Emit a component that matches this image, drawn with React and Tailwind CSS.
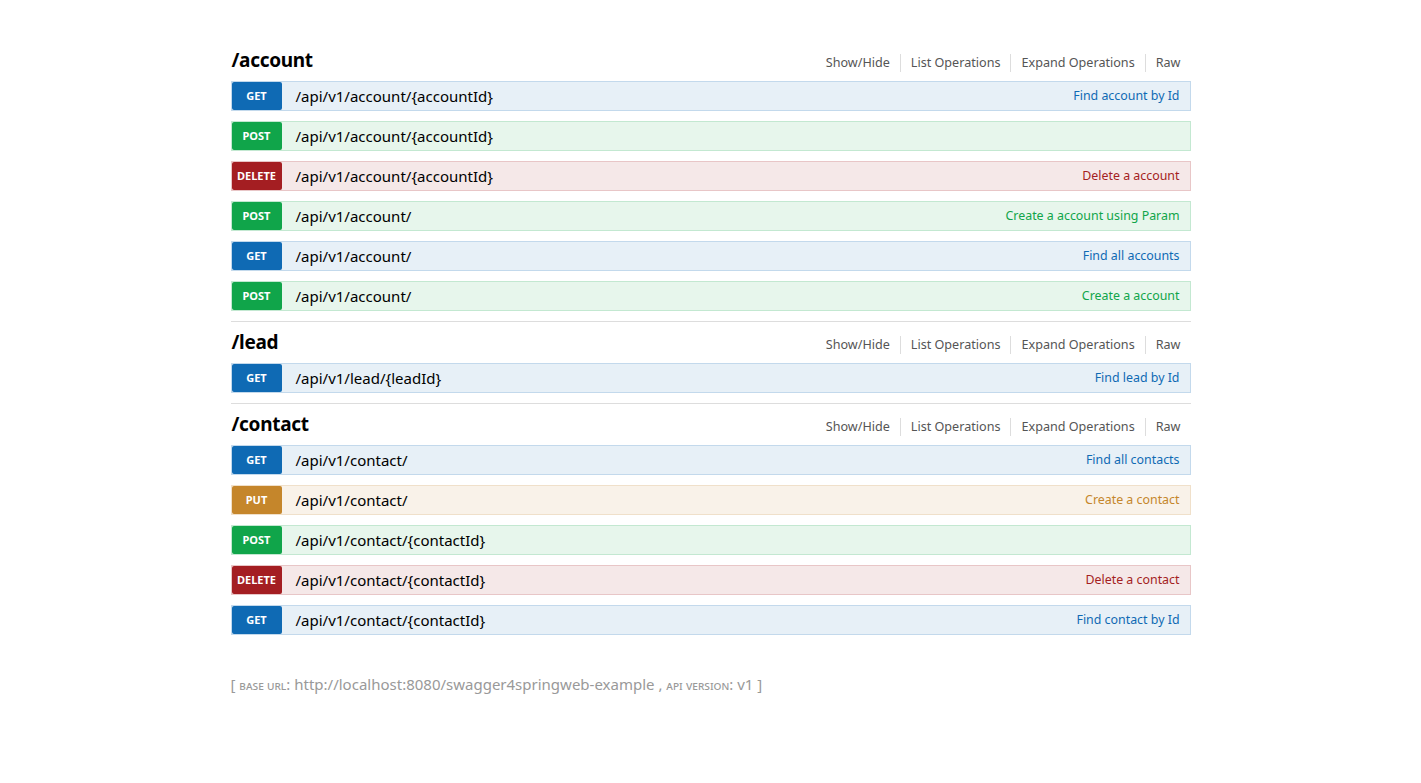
import React from 'react';

const METHODS = {
  get: { badge: 'bg-[#0f6ab4]', row: 'bg-[#e7f0f7] border-[#c3d9ec]', text: 'text-[#0f6ab4]' },
  post: { badge: 'bg-[#10a54a]', row: 'bg-[#e7f6ec] border-[#c3e8d1]', text: 'text-[#10a54a]' },
  delete: { badge: 'bg-[#a41e22]', row: 'bg-[#f5e8e8] border-[#e8c6c7]', text: 'text-[#a41e22]' },
  put: { badge: 'bg-[#c5862b]', row: 'bg-[#f9f2e9] border-[#f0e0ca]', text: 'text-[#c5862b]' },
};

const resources = [
  {
    name: '/account',
    ops: [
      { method: 'get', path: '/api/v1/account/{accountId}', summary: 'Find account by Id' },
      { method: 'post', path: '/api/v1/account/{accountId}', summary: '' },
      { method: 'delete', path: '/api/v1/account/{accountId}', summary: 'Delete a account' },
      { method: 'post', path: '/api/v1/account/', summary: 'Create a account using Param' },
      { method: 'get', path: '/api/v1/account/', summary: 'Find all accounts' },
      { method: 'post', path: '/api/v1/account/', summary: 'Create a account' },
    ],
  },
  {
    name: '/lead',
    ops: [{ method: 'get', path: '/api/v1/lead/{leadId}', summary: 'Find lead by Id' }],
  },
  {
    name: '/contact',
    ops: [
      { method: 'get', path: '/api/v1/contact/', summary: 'Find all contacts' },
      { method: 'put', path: '/api/v1/contact/', summary: 'Create a contact' },
      { method: 'post', path: '/api/v1/contact/{contactId}', summary: '' },
      { method: 'delete', path: '/api/v1/contact/{contactId}', summary: 'Delete a contact' },
      { method: 'get', path: '/api/v1/contact/{contactId}', summary: 'Find contact by Id' },
    ],
  },
];

const links = ['Show/Hide', 'List Operations', 'Expand Operations', 'Raw'];

const Operation = ({ method, path, summary }) => {
  const m = METHODS[method];
  return (
    <li className={`mb-[10px] flex h-[30px] items-center border ${m.row}`}>
      <span className={`flex h-[28px] w-[50px] items-center justify-center rounded-[2px] text-[11px] font-bold uppercase text-white ${m.badge}`}>
        {method}
      </span>
      <span className="ml-[14px] text-[15px] leading-[20px] text-black">{path}</span>
      <span className={`ml-auto pr-[10px] pt-[1px] text-[12.4px] ${m.text}`}>{summary}</span>
    </li>
  );
};

const Resource = ({ name, ops, first }) => (
  <div className={first ? '' : 'border-t border-[#ddd]'}>
    <div className="flex h-[41px] items-center">
      <h2 className="pl-[1px] text-[19px] font-bold tracking-[-0.3px] text-black">{name}</h2>
      <ul className="ml-auto flex items-center pr-[10px] pt-[5px] text-[12.6px] text-[#555]">
        {links.map((l, i) => (
          <li
            key={l}
            className={`leading-[18px] ${i === 0 ? 'pr-[10px]' : 'px-[10px]'} ${i === links.length - 1 ? 'pr-0' : 'border-r border-[#ddd]'}`}
          >
            {l}
          </li>
        ))}
      </ul>
    </div>
    <ul>
      {ops.map((op, i) => (
        <Operation key={i} {...op} />
      ))}
    </ul>
  </div>
);

export default function App() {
  return (
    <div className="min-h-screen bg-white" style={{ fontFamily: '"Noto Sans", "DejaVu Sans", sans-serif' }}>
      <div className="mx-auto w-[960px] pt-[40px]">
        {resources.map((r, i) => (
          <Resource key={r.name} {...r} first={i === 0} />
        ))}
        <div className="mt-[39px] text-[15px] leading-[20px] text-[#999]">
          [ <span className="text-[12.5px]" style={{ fontVariant: 'small-caps' }}>base url</span>: http://localhost:8080/swagger4springweb-example ,{' '}
          <span className="text-[12.5px]" style={{ fontVariant: 'small-caps' }}>api version</span>: v1 ]
        </div>
      </div>
    </div>
  );
}
